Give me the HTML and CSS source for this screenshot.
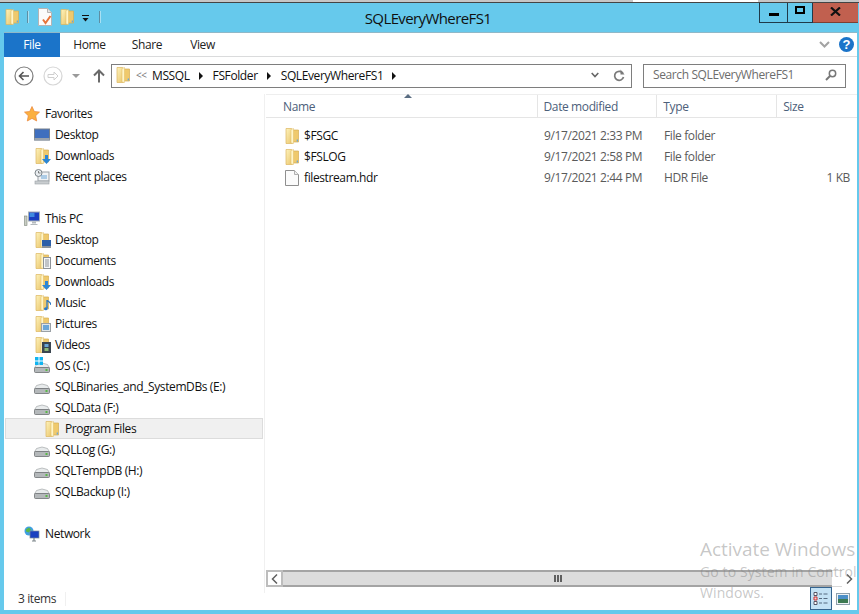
FILE: index.html
```html
<!DOCTYPE html>
<html lang="en">
<head>
<meta charset="utf-8">
<title>SQLEveryWhereFS1</title>
<link rel="stylesheet" href="styles.css">
</head>
<body>
<svg class="defs" width="0" height="0" aria-hidden="true">
  <defs>
    <linearGradient id="fy" x1="0" y1="0" x2="1" y2="1"><stop offset="0" stop-color="#fdf3bd"/><stop offset="1" stop-color="#eac468"/></linearGradient>
    <symbol id="folder" viewBox="0 0 16 16">
      <path d="M2 .5h5.500l1 .8v14.200H2z" fill="url(#fy)" stroke="#dcb65e" stroke-width=".7"/>
      <path d="M8.500 2h6v12h-6z" fill="#efc96c" stroke="#d6ae52" stroke-width=".7"/>
      <path d="M7 1.500l2.500-1v15l-2.500-.5z" fill="#fff5c8" stroke="#dfba62" stroke-width=".5"/>
      <rect x="12.700" y="11.500" width="1.300" height="2" fill="#6aa6d8"/>
    </symbol>
    <symbol id="drive" viewBox="0 0 16 16">
      <path d="M2.500 6.500Q8 3.500 13.500 6.500L15.500 10H.5z" fill="#e8ebec" stroke="#a5a9ab" stroke-width=".7"/>
      <rect x=".5" y="9.500" width="15" height="5" rx="1" fill="#b4b8ba" stroke="#6c7072" stroke-width=".8"/>
      <rect x="11.500" y="11" width="2" height="2" fill="#59b847"/>
    </symbol>
  </defs>
</svg>
<div class="window">
  <div class="backdrop"></div>
  <header class="titlebar">
    <div class="qat">
      <svg class="qat-first" width="16" height="16"><use href="#folder"/></svg>
      <span class="qat-sep qat-sep-a"></span>
      <svg class="qat-doc" width="16" height="18" viewBox="0 0 16 18"><path d="M1.500.5h9l4 4v13h-13z" fill="#fbfbfb" stroke="#b4b4b4"/><path d="M10.500.5v4h4" fill="#e4e4e4" stroke="#b4b4b4"/><path d="M6 11.500l2.500 3.500 5-7" fill="none" stroke="#e8743a" stroke-width="2"/></svg>
      <svg width="16" height="16"><use href="#folder"/></svg>
      <svg class="qat-drop" width="7" height="7" viewBox="0 0 7 7"><path d="M0 0h7v1H0zM.5 3h6L3.500 6.500z" fill="#111"/></svg>
      <span class="qat-sep"></span>
    </div>
    <h1 class="title">SQLEveryWhereFS1</h1>
    <div class="caption">
      <div class="cap-btn cap-min"><span class="min-glyph"></span></div>
      <div class="cap-btn cap-max"><span class="max-glyph"></span></div>
      <div class="cap-close"><svg width="11" height="9" viewBox="0 0 11 9"><path d="M1 .5l9 8M10 .5l-9 8" stroke="#111" stroke-width="2.200" fill="none"/></svg></div>
    </div>
  </header>
  <div class="pane">
    <nav class="ribbon">
      <div class="tab-file">File</div>
      <div class="tab">Home</div>
      <div class="tab tab-share">Share</div>
      <div class="tab tab-view">View</div>
      <div class="ribbon-end">
        <svg width="11" height="7" viewBox="0 0 11 7"><path d="M1 1l4.500 4.500L10 1" fill="none" stroke="#a3a3a3" stroke-width="2"/></svg>
        <span class="help">?</span>
      </div>
    </nav>
    <div class="addressbar">
      <div class="navbtns">
        <svg width="20" height="20" viewBox="0 0 20 20"><circle cx="10" cy="10" r="9" fill="#fff" stroke="#7c7c7c" stroke-width="1.200"/><path d="M15 10H6M9.500 6L5.500 10l4 4" fill="none" stroke="#555" stroke-width="1.600"/></svg>
        <svg class="nav-fwd" width="20" height="20" viewBox="0 0 20 20"><circle cx="10" cy="10" r="9" fill="#fff" stroke="#d6d6d6" stroke-width="1.200"/><path d="M5 8.500h6V6l4 4-4 4v-2.500H5z" fill="none" stroke="#cfcfcf"/></svg>
        <svg class="nav-drop" width="8" height="4" viewBox="0 0 8 4"><path d="M0 0h8L4 4z" fill="#9a9a9a"/></svg>
        <svg class="nav-up" width="12" height="14" viewBox="0 0 12 14"><path d="M6 13.500V2M1 6.500L6 1.500l5 5" fill="none" stroke="#6a6a6a" stroke-width="2"/></svg>
      </div>
      <div class="crumbs">
        <svg width="16" height="16"><use href="#folder"/></svg>
        <span class="crumb-more">&lt;&lt;</span>
        <span class="crumb">MSSQL</span><i class="arrow"></i>
        <span class="crumb">FSFolder</span><i class="arrow"></i>
        <span class="crumb">SQLEveryWhereFS1</span><i class="arrow"></i>
        <span class="crumbs-end">
          <svg width="8" height="6" viewBox="0 0 8 6"><path d="M.7 1L4 4.500 7.300 1" fill="none" stroke="#666" stroke-width="1.600"/></svg>
          <svg width="12" height="13" viewBox="0 0 12 13"><path d="M10 4.500A4.500 4.500 0 1 0 10.500 8" fill="none" stroke="#7a7a7a" stroke-width="1.700"/><path d="M7.500 .5v5h4z" fill="#7a7a7a"/></svg>
        </span>
      </div>
      <div class="search">
        <span>Search SQLEveryWhereFS1</span>
        <svg width="12" height="12" viewBox="0 0 12 12"><circle cx="7.500" cy="4.500" r="3.200" fill="none" stroke="#777" stroke-width="1.500"/><path d="M5 7l-4 4" stroke="#777" stroke-width="2"/></svg>
      </div>
    </div>
    <div class="main">
      <aside class="sidebar">
        <div class="row top"><svg width="16" height="16" viewBox="0 0 16 16"><path d="M8 .5l2.300 5 5.200.6-3.800 3.600 1 5.300L8 12.400 3.300 15l1-5.300L.5 6.100l5.200-.6z" fill="#fbb040" stroke="#e9843a" stroke-width=".7"/></svg>Favorites</div>
        <div class="row sub"><svg width="16" height="16" viewBox="0 0 16 16"><rect x=".5" y="2" width="15" height="11" fill="#3f6fbe" stroke="#76808c"/><rect x=".5" y="11" width="15" height="2.500" fill="#9aa3ad"/></svg>Desktop</div>
        <div class="row sub"><span class="ico"><svg width="16" height="16"><use href="#folder"/></svg><svg class="badge" width="9" height="9" viewBox="0 0 9 9"><path d="M3 0h3v4h3L4.500 9 0 4h3z" fill="#2a86d6"/></svg></span>Downloads</div>
        <div class="row sub"><svg width="16" height="16" viewBox="0 0 16 16"><rect x="4" y="3" width="11" height="9" fill="#f0f2f4" stroke="#9aa0a5"/><circle cx="4.500" cy="4" r="3.500" fill="#e9edf0" stroke="#7d858a"/><path d="M4.500 2v2h2" stroke="#555" fill="none" stroke-width=".7"/><path d="M7 7h6M7 9h6" stroke="#6aa6d8"/><rect x="1" y="12" width="14" height="3" fill="#c9cdd0" stroke="#9aa0a5" stroke-width=".6"/></svg>Recent places</div>
        <div class="row"></div>
        <div class="row top"><svg width="16" height="16" viewBox="0 0 16 16"><rect x="4.500" y="1" width="11" height="9" fill="#1a3fc0" stroke="#a8b0b5"/><path d="M5.500 2h5v4h-5z" fill="#3f8ae0"/><path d="M8 10.500h4v2H8zM6.500 13h7v1h-7z" fill="#b4babd"/><rect x=".5" y="5" width="2.500" height="9.500" fill="#c9cdc4" stroke="#7d857a" stroke-width=".6"/></svg>This PC</div>
        <div class="row sub"><span class="ico"><svg width="16" height="16"><use href="#folder"/></svg><svg class="badge" width="9" height="8" viewBox="0 0 9 8"><rect width="9" height="6.500" fill="#2d5fa8"/><rect y="6" width="9" height="2" fill="#8a929a"/></svg></span>Desktop</div>
        <div class="row sub"><span class="ico"><svg width="16" height="16"><use href="#folder"/></svg><svg class="badge" width="8" height="12" viewBox="0 0 8 12"><rect x=".5" y=".5" width="7" height="11" fill="#f4f6f8" stroke="#8e9398"/><path d="M2 3h4M2 5h4M2 7h4M2 9h4" stroke="#8e9398"/></svg></span>Documents</div>
        <div class="row sub"><span class="ico"><svg width="16" height="16"><use href="#folder"/></svg><svg class="badge" width="9" height="9" viewBox="0 0 9 9"><path d="M3 0h3v4h3L4.500 9 0 4h3z" fill="#2a86d6"/></svg></span>Downloads</div>
        <div class="row sub"><span class="ico"><svg width="16" height="16"><use href="#folder"/></svg><svg class="badge" width="7" height="11" viewBox="0 0 7 11"><path d="M3 0c1 2 4 2 4 5M3 0v8" fill="none" stroke="#2a78c6" stroke-width="1.300"/><ellipse cx="1.800" cy="8.800" rx="1.800" ry="1.500" fill="#2a78c6"/></svg></span>Music</div>
        <div class="row sub"><span class="ico"><svg width="16" height="16"><use href="#folder"/></svg><svg class="badge" width="10" height="9" viewBox="0 0 10 9"><rect x=".5" y=".5" width="9" height="8" fill="#dfe5e8" stroke="#9aa0a5"/><rect x="2" y="2" width="6" height="5" fill="#6aa6d8"/></svg></span>Pictures</div>
        <div class="row sub"><span class="ico"><svg width="16" height="16"><use href="#folder"/></svg><svg class="badge" width="9" height="11" viewBox="0 0 9 11"><rect width="9" height="11" fill="#3a4550"/><rect x="2.500" y="2" width="4" height="3" fill="#6aa6d8"/><rect x="2.500" y="6" width="4" height="3" fill="#8ab878"/></svg></span>Videos</div>
        <div class="row sub"><span class="ico"><svg width="16" height="16"><use href="#drive"/></svg><svg class="badge-win" width="8" height="8" viewBox="0 0 8 8"><path d="M0 0h3.500v3.500H0zM4.500 0H8v3.500H4.500zM0 4.500h3.500V8H0zM4.500 4.500H8V8H4.500z" fill="#11b4f0"/></svg></span>OS (C:)</div>
        <div class="row sub"><svg width="16" height="16"><use href="#drive"/></svg>SQLBinaries_and_SystemDBs (E:)</div>
        <div class="row sub"><svg width="16" height="16"><use href="#drive"/></svg>SQLData (F:)</div>
        <div class="row selected"><svg width="16" height="16"><use href="#folder"/></svg>Program Files</div>
        <div class="row sub"><svg width="16" height="16"><use href="#drive"/></svg>SQLLog (G:)</div>
        <div class="row sub"><svg width="16" height="16"><use href="#drive"/></svg>SQLTempDB (H:)</div>
        <div class="row sub"><svg width="16" height="16"><use href="#drive"/></svg>SQLBackup (I:)</div>
        <div class="row"></div>
        <div class="row top"><svg width="16" height="16" viewBox="0 0 16 16"><circle cx="5" cy="5" r="4.500" fill="#3f9fe0"/><path d="M2 3.500l3-2 2 2-2 3-3-1z" fill="#59b847"/><rect x="6" y="5" width="9" height="7" fill="#1a3fc0" stroke="#7d8a9a" stroke-width=".7"/><path d="M10 12v2.500M8 15h4" stroke="#7d858a" stroke-width="1.200"/></svg>Network</div>
      </aside>
      <section class="list">
        <div class="list-head">
          <span class="sort"></span>
          <div class="col col-name">Name</div>
          <div class="col col-date">Date modified</div>
          <div class="col col-type">Type</div>
          <div class="col col-size">Size</div>
        </div>
        <div class="list-body">
          <div class="file"><div class="fname"><svg width="16" height="16"><use href="#folder"/></svg>$FSGC</div><div class="fdate">9/17/2021 2:33 PM</div><div class="ftype">File folder</div><div class="fsize"></div></div>
          <div class="file"><div class="fname"><svg width="16" height="16"><use href="#folder"/></svg>$FSLOG</div><div class="fdate">9/17/2021 2:58 PM</div><div class="ftype">File folder</div><div class="fsize"></div></div>
          <div class="file"><div class="fname"><svg width="16" height="16" viewBox="0 0 16 16"><path d="M1.500.5h9l4 4v11h-13z" fill="#fbfbfb" stroke="#8f8f8f"/><path d="M10.500.5v4h4" fill="#eee" stroke="#b0b0b0"/></svg>filestream.hdr</div><div class="fdate">9/17/2021 2:44 PM</div><div class="ftype">HDR File</div><div class="fsize">1 KB</div></div>
        </div>
        <div class="hscroll">
          <div class="sb-btn"><svg width="7" height="10" viewBox="0 0 7 10"><path d="M6 .5L1.500 5 6 9.500" fill="none" stroke="#606060" stroke-width="1.500"/></svg></div>
          <div class="sb-thumb"><span></span><span></span><span></span></div>
          <div class="sb-track"></div>
          <div class="sb-btn sb-right"><svg width="7" height="10" viewBox="0 0 7 10"><path d="M1 .5L5.500 5 1 9.500" fill="none" stroke="#606060" stroke-width="1.500"/></svg></div>
        </div>
      </section>
    </div>
    <footer class="status">
      <span class="count">3 items</span>
      <div class="views">
        <div class="view-btn on"><svg width="16" height="15" viewBox="0 0 16 15"><path d="M1 1.500h3v3H1z" fill="#fff" stroke="#556"/><path d="M1 6h3v3H1z" fill="#f0d0d0" stroke="#c33"/><path d="M1 10.500h3v3H1z" fill="#fff" stroke="#556"/><path d="M6 3h3M10.500 3h4M6 7.500h3M10.500 7.500h4M6 12h3M10.500 12h4" stroke="#556a80"/></svg></div>
        <div class="view-btn"><svg width="14" height="12" viewBox="0 0 14 12"><rect x=".5" y=".5" width="13" height="11" fill="#eef2f4" stroke="#8ea0ac"/><rect x="2" y="2" width="10" height="4" fill="#4c90c8"/><rect x="2" y="6" width="10" height="4" fill="#3d7a52"/></svg></div>
      </div>
    </footer>
  </div>
  <div class="activate">
    <div class="act-big">Activate Windows</div>
    <div class="act-small">Go to System in Control</div>
    <div class="act-small">Windows.</div>
  </div>
</div>
</body>
</html>
```
FILE: styles.css
```css
* { box-sizing: border-box; }
html, body { margin: 0; height: 100%; overflow: hidden; background: #fff; }
body { font: 12px/16px "Open Sans", "Noto Sans", sans-serif; color: #111; letter-spacing: -.39px; }
.defs { position: absolute; }
svg { display: block; flex: none; }

.window { position: relative; display: flex; flex-direction: column; width: 859px; height: 614px; background: #66c9ec; overflow: hidden; }
.backdrop { height: 3px; flex: none; background: linear-gradient(90deg, #c6c6c6 633px, #fff 633px, #fff 758px, #c6c6c6 758px); border-bottom: 1px solid #444; }

.titlebar { display: flex; height: 29px; padding-left: 4px; position: relative; flex: none; }
.qat { display: flex; align-items: center; height: 28px; }
.qat-sep { width: 1px; height: 12px; background: #5e8ea3; box-shadow: 1px 0 0 #a8e0f3; }
.qat-sep-a { margin: 0 9px 0 7px; }
.qat-doc { margin-right: 6px; }
.qat-drop { margin: 2px 10px 0 7px; }
.title { position: absolute; left: 0; right: 0; top: 4px; margin: 0; text-align: center; font-size: 15px; line-height: 22px; font-weight: 400; color: #101010; letter-spacing: -.6px; padding-right: 3px; }
.caption { display: flex; margin-left: auto; margin-right: 1px; height: 20px; align-self: flex-start; position: relative; }
.cap-btn { display: flex; align-items: center; justify-content: center; height: 20px; border: 1px solid #1f3a4a; border-top: 0; }
.cap-min { width: 28px; border-right: 0; }
.cap-max { width: 26px; }
.cap-close { display: flex; align-items: center; justify-content: center; width: 45px; height: 20px; background: #c1604f; border-bottom: 1px solid #7d4034; padding-bottom: 2px; }
.min-glyph { width: 10px; height: 3px; background: #000; margin-top: 3px; }
.max-glyph { width: 10px; height: 8px; border: 2px solid #000; margin-top: -5px; }

.pane { flex: 1; display: flex; flex-direction: column; margin: 0 2px 4px 4px; background: #fff; border-top: 1px solid #8fb8c8; min-height: 0; }

.ribbon { display: flex; height: 24px; flex: none; border-bottom: 1px solid #dadbdc; align-items: center; }
.tab-file { align-self: stretch; width: 56px; margin-bottom: -1px; background: #1b74c9; color: #fff; text-align: center; line-height: 24px; }
.tab { color: #222; width: 58px; text-align: center; padding: 1px 0 0 1px; }
.tab-share { width: 57px; }
.tab-view { width: 54px; }
.ribbon-end { margin-left: auto; display: flex; align-items: center; gap: 9px; padding-right: 3px; }
.help { width: 15px; height: 15px; border-radius: 50%; background: #1b74c9; color: #fff; font: 700 13px/15px "Liberation Sans", sans-serif; letter-spacing: 0; text-align: center; }

.addressbar { display: flex; height: 37px; flex: none; align-items: center; }
.navbtns { display: flex; align-items: center; width: 107px; padding-left: 10px; }
.nav-fwd { margin-left: 9px; }
.nav-drop { margin-left: 9px; }
.nav-up { margin-left: 13px; }
.crumbs { display: flex; align-items: center; width: 521px; height: 24px; border: 1px solid #7e7e7e; padding-left: 3px; color: #111; line-height: 15px; padding-bottom: 1px; }
.crumb-more { margin-left: 5px; color: #777; font-size: 10px; letter-spacing: -.5px; width: 16px; }
.arrow { width: 0; height: 0; border-left: 4px solid #111; border-top: 4px solid transparent; border-bottom: 4px solid transparent; margin: 1px 10px 0 9px; }
.crumbs-end { margin-left: auto; display: flex; align-items: center; gap: 14px; padding-right: 6px; }
.search { display: flex; align-items: center; justify-content: space-between; width: 203px; height: 24px; margin-left: 11px; border: 1px solid #7e7e7e; padding: 0 8px 1px 9px; color: #6d6d6d; }

.main { flex: 1; display: flex; min-height: 0; }
.sidebar { width: 261px; flex: none; padding-top: 9px; padding-left: 1px; border-right: 1px solid #f0f0f0; }
.row { display: flex; align-items: center; height: 21px; gap: 5px; white-space: nowrap; color: #111; }
.top { padding-left: 19px; }
.sub { padding-left: 29px; }
.selected { height: 21px; padding: 0 0 0 38px; background: #f0f0f0; border: 1px solid #dcdcdc; width: 258px; }
.ico { position: relative; display: block; width: 16px; height: 16px; flex: none; }
.badge { position: absolute; right: -1px; bottom: 0; }
.badge-win { position: absolute; left: 1px; top: -1px; }

.list { flex: 1; display: flex; flex-direction: column; min-width: 0; padding-left: 1px; position: relative; }
.list-head { display: flex; height: 24px; flex: none; border-top: 1px solid #eee; border-bottom: 1px solid #e5e5e5; color: #4c607a; line-height: 24px; position: relative; }
.sort { position: absolute; left: 138px; top: -1px; border-left: 4px solid transparent; border-right: 4px solid transparent; border-bottom: 4px solid #5a6d82; }
.col { padding-left: 6px; border-right: 1px solid #e5e5e5; }
.col-name { width: 272px; padding-left: 17px; }
.col-date { width: 120px; }
.col-type { width: 120px; }
.col-size { width: 80px; border-right: 0; }
.list-body { flex: 1; padding-top: 7px; }
.file { display: flex; height: 21px; align-items: center; }
.fname { display: flex; align-items: center; gap: 4px; width: 271px; padding-left: 18px; }
.fdate { width: 120px; padding-left: 7px; color: #5a5a5a; }
.ftype { width: 120px; padding-left: 7px; color: #5a5a5a; }
.fsize { width: 73px; text-align: right; color: #5a5a5a; }

.hscroll { display: flex; height: 17px; flex: none; margin-bottom: 6px; }
.sb-btn { display: flex; align-items: center; justify-content: center; width: 17px; border: 2px solid #bdbdbd; background: #fff; }
.sb-right { width: 15px; border: 0; }
.sb-thumb { width: 549px; display: flex; justify-content: center; align-items: center; gap: 1px; background: #dcdcdc; border-top: 2px solid #a4a4a4; border-bottom: 2px solid #a4a4a4; }
.sb-thumb span { width: 2px; height: 7px; background: #5f5f5f; }
.sb-track { width: 10px; border-top: 1px solid #d8d8d8; border-bottom: 1px solid #d8d8d8; }

.status { display: flex; height: 20px; flex: none; align-items: center; padding: 0 0 3px 14px; color: #333; position: relative; margin-top: -3px; }
.count { width: 48px; border-right: 1px solid #f0f0f0; height: 14px; line-height: 14px; }
.views { margin-left: auto; display: flex; height: 23px; align-self: flex-start; margin-top: -3px; }
.view-btn { display: flex; align-items: center; justify-content: center; width: 22px; height: 23px; }
.view-btn.on { background: #c4e2f5; border: 1px solid #35648f; }
.view-btn:last-child { margin-right: 3px; }

.activate { position: absolute; left: 700px; top: 537px; width: 159px; white-space: nowrap; color: rgba(130,130,130,.45); pointer-events: none; }
.act-big { font-size: 19px; line-height: 24px; letter-spacing: -.05px; }
.act-small { font-size: 14px; line-height: 21px; letter-spacing: .1px; }
```
